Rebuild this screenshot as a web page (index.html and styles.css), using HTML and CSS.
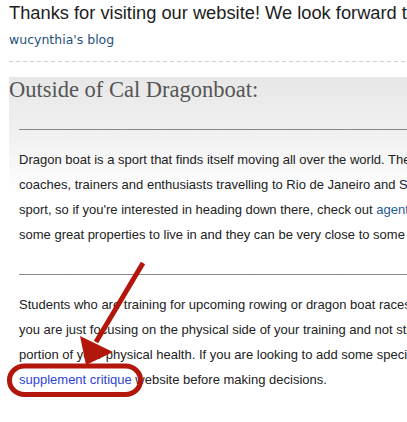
FILE: index.html
```html
<!DOCTYPE html>
<html>
<head>
<meta charset="utf-8">
<link rel="stylesheet" href="styles.css">
</head>
<body>
<div class="page">
  <h1 class="site-title">Thanks for visiting our website! We look forward to hearing from you soon.</h1>
  <div class="byline"><a href="#">wucynthia's blog</a></div>
  <div class="dash-rule"></div>
  <div class="post">
    <h2 class="post-title">Outside of Cal Dragonboat:</h2>
    <div class="post-body">
      <div class="sep sep-first">________________________________________________________________________________________________________________</div>
      <p class="para">Dragon boat is a sport that finds itself moving all over the world. There are many<br>coaches, trainers and enthusiasts travelling to Rio de Janeiro and Sao Paulo for the<br>sport, so if you're interested in heading down there, check out <a class="link-dark" href="#">agents in Brazil</a> for<br>some great properties to live in and they can be very close to some of the training grounds.</p>
      <div class="sep">________________________________________________________________________________________________________________</div>
      <p class="para">Students who are training for upcoming rowing or dragon boat races should know that<br>you are just focusing on the physical side of your training and not still taking care of<br>portion of your physical health. If you are looking to add some special supplements, see a<br><a class="link-bright" href="#">supplement critique</a> website before making decisions.</p>
    </div>
  </div>
</div>
<svg class="annotation" width="407" height="422" viewBox="0 0 407 422">
  <line x1="143" y1="263" x2="96" y2="342" stroke="#b3170b" stroke-width="5" stroke-linecap="butt"/>
  <polygon points="80,336 113,352 86,365" fill="#b3170b"/>
  <rect x="9.5" y="366" width="131" height="28.5" rx="15" ry="14" fill="none" stroke="#b3170b" stroke-width="5"/>
</svg>
</body>
</html>
```
FILE: styles.css
```css
html, body {
  margin: 0;
  padding: 0;
  background: #fff;
  overflow: hidden;
}
body {
  width: 407px;
  height: 422px;
  position: relative;
}
.page {
  width: 1100px;
  padding: 1px 9px 0;
}
.site-title {
  margin: 0;
  font-family: "Liberation Sans", Arial, sans-serif;
  font-weight: normal;
  font-size: 18.3px;
  line-height: 24px;
  color: #1d1d1d;
  white-space: nowrap;
}
.byline {
  margin-top: 7px;
  font-family: "DejaVu Sans", sans-serif;
  font-size: 12.5px;
  line-height: 16px;
}
.byline a {
  color: #1f4f7c;
  text-decoration: none;
}
.dash-rule {
  margin-top: 13px;
  height: 1px;
  background-image: repeating-linear-gradient(to right, #cfcfcf 0 4px, transparent 4px 7px);
}
.post {
  margin-top: 15px;
  background: linear-gradient(to bottom, #e7e7e7 0, #f1f1f1 60px, #ffffff 118px) no-repeat;
}
.post-title {
  margin: 0;
  padding-top: 1px;
  font-family: "Liberation Serif", Georgia, serif;
  font-weight: normal;
  font-size: 22.5px;
  line-height: 24px;
  color: #555;
}
.post-body {
  padding-left: 10px;
  font-family: "Liberation Sans", Arial, sans-serif;
  font-size: 13px;
  line-height: 25px;
  color: #222;
}
.sep {
  margin-top: 8px;
  white-space: nowrap;
  overflow: hidden;
  color: #7a7a7a;
}
.sep-first {
  margin-top: 8px;
}
.para {
  margin: 12px 0 0;
  white-space: nowrap;
}
.link-dark {
  color: #1f5b93;
  text-decoration: none;
}
.link-bright {
  color: #2e44d4;
  text-decoration: none;
}
.annotation {
  position: absolute;
  top: 0;
  left: 0;
  pointer-events: none;
}
```
